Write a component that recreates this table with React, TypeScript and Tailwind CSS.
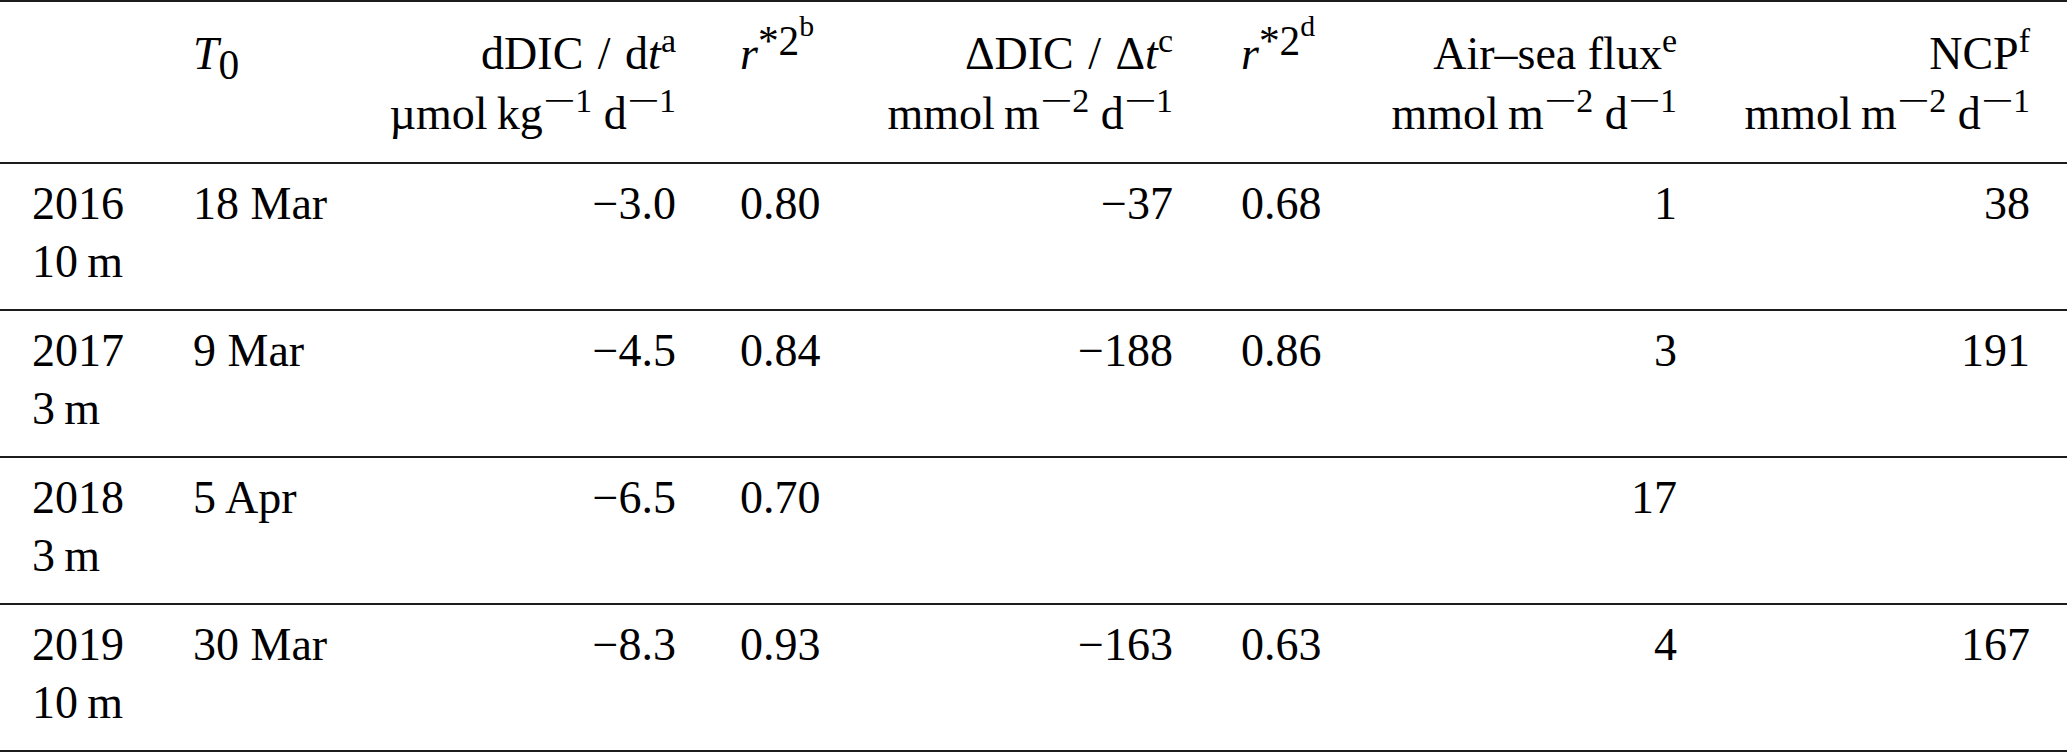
import type { ReactNode } from 'react';

const cols = 'grid grid-cols-[161px_219px_328px_142px_355px_135px_369px_1fr]';

// superscript footnote / exponent
function Sup({ children }: { children: ReactNode }) {
  return <sup className="text-[0.74em] top-[-0.5em]">{children}</sup>;
}

// math-style minus, wider than the text one
function Neg() {
  return <span className="inline-block w-[0.95em] text-center scale-x-[1.7]">−</span>;
}

function Slash() {
  return <span className="px-[3px]">/</span>;
}

const perArea = (
  <span className="whitespace-nowrap">
    mmol{'\u2009'}m
    <Sup>
      <Neg />2
    </Sup>
    {' '}d
    <Sup>
      <Neg />1
    </Sup>
  </span>
);

interface Row {
  year: string;
  depth: string;
  t0: string;
  rate: string;
  r1: string;
  delta: string;
  r2: string;
  flux: string;
  ncp: string;
}

const rows: Row[] = [
  { year: '2016', depth: '10\u2009m', t0: '18 Mar', rate: '−3.0', r1: '0.80', delta: '−37', r2: '0.68', flux: '1', ncp: '38' },
  { year: '2017', depth: '3\u2009m', t0: '9 Mar', rate: '−4.5', r1: '0.84', delta: '−188', r2: '0.86', flux: '3', ncp: '191' },
  { year: '2018', depth: '3\u2009m', t0: '5 Apr', rate: '−6.5', r1: '0.70', delta: '', r2: '', flux: '17', ncp: '' },
  { year: '2019', depth: '10\u2009m', t0: '30 Mar', rate: '−8.3', r1: '0.93', delta: '−163', r2: '0.63', flux: '4', ncp: '167' },
];

function RSq({ note }: { note: string }) {
  return (
    <span className="whitespace-nowrap">
      <i>r</i>
      <sup className="text-[0.9em] top-[-0.34em]">
        *2<sup className="text-[0.72em] top-[-0.62em]">{note}</sup>
      </sup>
    </span>
  );
}

export default function App() {
  return (
    <div className="w-[2067px] h-[752px] bg-white text-black font-['Liberation_Serif','Times_New_Roman',serif] text-[46px]">
      {/* header */}
      <div className={`${cols} border-t-2 border-b-2 border-[#1c1c1c] pt-[22px] pb-[18px] leading-[60px]`}>
        <div />
        <div className="pl-[32px]">
          <i>T</i>
          <sub className="text-[0.9em] bottom-[-0.24em]">0</sub>
        </div>
        <div className="pr-[32px] text-right">
          <div>
            dDIC <Slash /> d<i>t</i>
            <Sup>a</Sup>
          </div>
          <div className="whitespace-nowrap">
            µmol{'\u2009'}kg
            <Sup>
              <Neg />1
            </Sup>
            {' '}d
            <Sup>
              <Neg />1
            </Sup>
          </div>
        </div>
        <div className="pl-[32px]">
          <RSq note="b" />
        </div>
        <div className="pr-[32px] text-right">
          <div>
            ΔDIC <Slash /> Δ<i>t</i>
            <Sup>c</Sup>
          </div>
          <div>{perArea}</div>
        </div>
        <div className="pl-[36px]">
          <RSq note="d" />
        </div>
        <div className="pr-[32px] text-right">
          <div>
            Air–sea flux<Sup>e</Sup>
          </div>
          <div>{perArea}</div>
        </div>
        <div className="pr-[37px] text-right">
          <div>
            NCP<Sup>f</Sup>
          </div>
          <div>{perArea}</div>
        </div>
      </div>

      {/* body */}
      {rows.map((r) => (
        <div key={r.year} className={`${cols} border-b-2 border-[#1c1c1c] pt-[11px] pb-[18px] leading-[58px]`}>
          <div className="pl-[32px]">
            <div>{r.year}</div>
            <div>{r.depth}</div>
          </div>
          <div className="pl-[32px]">{r.t0}</div>
          <div className="pr-[32px] text-right">{r.rate}</div>
          <div className="pl-[32px]">{r.r1}</div>
          <div className="pr-[32px] text-right">{r.delta}</div>
          <div className="pl-[36px]">{r.r2}</div>
          <div className="pr-[32px] text-right">{r.flux}</div>
          <div className="pr-[37px] text-right">{r.ncp}</div>
        </div>
      ))}
    </div>
  );
}
